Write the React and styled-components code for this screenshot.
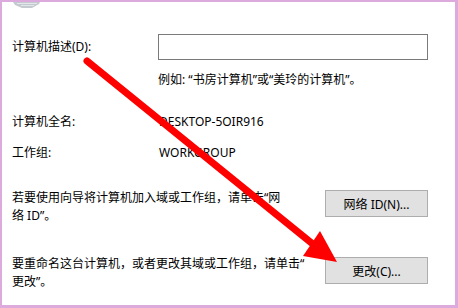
import React from "react";
import styled, { createGlobalStyle } from "styled-components";

// Colours taken from the screenshot
const frameColor = "#dcaadc";
const inputBorder = "#7a7a7a";
const buttonBg = "#e1e1e1";
const buttonBorder = "#adadad";
const arrowRed = "#ff0000";

const GlobalStyle = createGlobalStyle`
  html, body {
    margin: 0;
    padding: 0;
    background: #fff;
  }
  body {
    font-family: "Noto Sans", "Noto Sans CJK SC", sans-serif;
    font-size: 12px;
    color: #000;
  }
`;

const Frame = styled.div`
  position: relative;
  box-sizing: border-box;
  width: 458px;
  height: 308px;
  overflow: hidden;
  background: #fff;
  border-style: solid;
  border-color: ${frameColor};
  border-width: 2px 3px 3px 2px;
  padding: 0 27px 0 10px;
`;

const Header = styled.div`
  height: 32px;
  display: flex;
  align-items: flex-start;
  padding-left: 1px;

  svg {
    display: block;
  }
`;

const FieldRow = styled.div`
  display: grid;
  grid-template-columns: 146px 1fr;
  align-items: center;
  margin-top: ${({ $gap }) => $gap || 0}px;
  line-height: 18px;
`;

const Label = styled.span`
  white-space: nowrap;
`;

const Value = styled.span`
  white-space: nowrap;
  padding-left: 1px;
`;

const TextInput = styled.input`
  box-sizing: border-box;
  width: 270px;
  height: 26px;
  margin: 0;
  border: 1px solid ${inputBorder};
  border-radius: 0;
  outline: none;
  font: inherit;
  background: #fff;
`;

const Hint = styled.div`
  margin: 11px 0 0 146px;
  line-height: 18px;
  white-space: nowrap;
`;

const ActionRow = styled.div`
  display: grid;
  grid-template-columns: 1fr 103px;
  column-gap: 12px;
  align-items: start;
  margin-top: ${({ $gap }) => $gap}px;
`;

const Paragraph = styled.p`
  margin: 0;
  line-height: 18px;
  white-space: nowrap;
`;

const Button = styled.button`
  box-sizing: border-box;
  width: 103px;
  height: 27px;
  margin-top: ${({ $offset }) => $offset || 0}px;
  padding: 0;
  background: ${buttonBg};
  border: 1px solid ${buttonBorder};
  border-radius: 0;
  font: inherit;
  color: #000;
`;

const Overlay = styled.svg`
  position: absolute;
  left: -2px;
  top: -2px;
  width: 458px;
  height: 308px;
  pointer-events: none;
`;

// Bottom edge of the computer icon that is cut off by the top of the frame
const ComputerIcon = () => (
  <svg width="28" height="7" viewBox="0 0 28 7">
    <polygon points="0,0 27,0 26,2 19,6 9,6 2,3" fill="#c5cad0" />
    <line x1="4" y1="1.5" x2="24" y2="1.5" stroke="#e4e7ea" strokeWidth="1" />
    <line x1="8" y1="3.5" x2="21" y2="3.5" stroke="#e4e7ea" strokeWidth="1" />
  </svg>
);

const Arrow = () => (
  <Overlay viewBox="0 0 458 308">
    <line
      x1="87"
      y1="61"
      x2="314"
      y2="245"
      stroke={arrowRed}
      strokeWidth="7"
      strokeLinecap="round"
    />
    <polygon points="320,231 337,262 303,256" fill={arrowRed} />
  </Overlay>
);

const App = () => {
  return (
    <>
      <GlobalStyle />
      <Frame>
        <Header>
          <ComputerIcon />
        </Header>

        <FieldRow>
          <Label>计算机描述(D):</Label>
          <TextInput type="text" aria-label="计算机描述" />
        </FieldRow>
        <Hint>例如: “书房计算机”或“美玲的计算机”。</Hint>

        <FieldRow $gap={24}>
          <Label>计算机全名:</Label>
          <Value>DESKTOP-5OIR916</Value>
        </FieldRow>
        <FieldRow $gap={13}>
          <Label>工作组:</Label>
          <Value>WORKGROUP</Value>
        </FieldRow>

        <ActionRow $gap={27}>
          <Paragraph>
            若要使用向导将计算机加入域或工作组，请单击“网
            <br />
            络 ID”。
          </Paragraph>
          <Button $offset={1}>网络 ID(N)...</Button>
        </ActionRow>

        <ActionRow $gap={30}>
          <Paragraph>
            要重命名这台计算机，或者更改其域或工作组，请单击“
            <br />
            更改”。
          </Paragraph>
          <Button $offset={2}>更改(C)...</Button>
        </ActionRow>

        <Arrow />
      </Frame>
    </>
  );
};

export default App;
